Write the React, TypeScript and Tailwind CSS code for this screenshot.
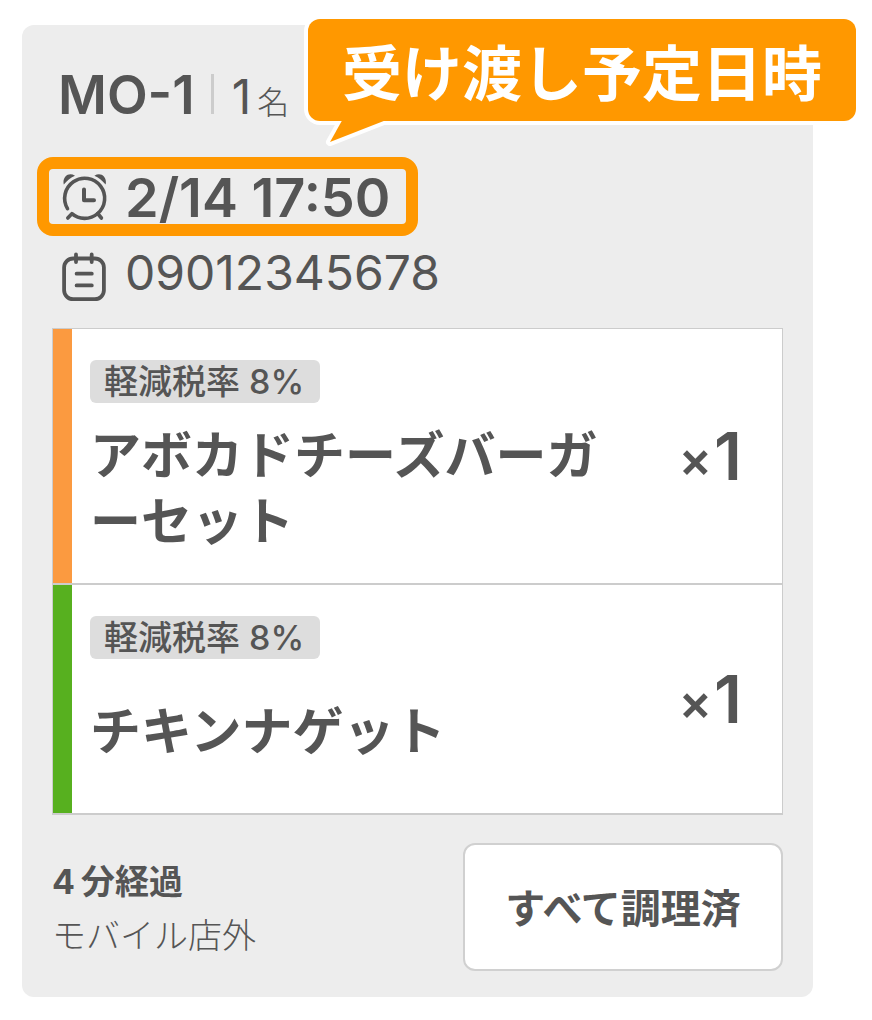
const items = [
  { id: "avocado", name: "アボカドチーズバーガーセット", tax: "軽減税率 8%", count: 1, bar: "bg-[#fb9a40]" },
  { id: "nugget", name: "チキンナゲット", tax: "軽減税率 8%", count: 1, bar: "bg-[#57b01f]" },
];

function AlarmIcon() {
  return (
    <svg width="48" height="48" viewBox="0 0 48 48" fill="none" stroke="currentColor" strokeWidth="3.6" strokeLinecap="round" strokeLinejoin="round" className="shrink-0" aria-hidden="true">
      <path d="M2.8 11.6C1 4.6 7-1.4 14 2.7 9.8 4.7 6.2 7.2 2.8 11.6Z" fill="currentColor" stroke="none" />
      <path d="M44.6 11.6C46.4 4.6 40.4-1.4 33.4 2.7 37.6 4.7 41.2 7.2 44.6 11.6Z" fill="currentColor" stroke="none" />
      <path d="M6.5 35.6A20 20 0 1 1 36.7 40.5C29 47 18 47 10.9 40.7L6.8 45" />
      <path d="M36.7 40.5 40.4 45" />
      <path d="M23 16.4V27.2H33" strokeWidth="4" />
    </svg>
  );
}

function NoteIcon() {
  return (
    <svg width="48" height="50" viewBox="0 0 48 50" fill="none" stroke="currentColor" strokeWidth="3.8" strokeLinecap="round" className="shrink-0" aria-hidden="true">
      <rect x="3.1" y="6.5" width="39.8" height="40.7" rx="9" />
      <path d="M15 2.4V10M30.7 2.4V10M15.6 21.7H30.8M15.6 33.4H30.8" />
    </svg>
  );
}

export default function App() {
  return (
    <main lang="ja" className="relative bg-white pt-[25px] pr-[59px] pb-6 pl-[22px] font-['Inter','Noto_Sans_CJK_JP',sans-serif] text-[#555555]">
      <article className="rounded-xl bg-[#ededed] pt-10 pb-[26px]">
        {/* Order number and party size */}
        <header className="flex items-baseline pl-9 leading-[60px]">
          <h1 className="text-[53px] font-semibold">MO-1</h1>
          <span className="ml-4 h-10 w-[3px] bg-[#cccccc]" />
          <p className="ml-[18px] text-[48px]">
            1<span className="ml-1.5 text-[32px] font-light">名</span>
          </p>
        </header>

        {/* Highlighted pickup time */}
        <div className="mt-6 ml-[15px] flex w-fit items-center gap-4 overflow-hidden rounded-2xl border-12 border-[#ff9800] pr-4 pl-3">
          <AlarmIcon />
          <time className="h-[55px] text-[54px] leading-[57px] font-semibold">2/14 17:50</time>
        </div>

        <div className="mt-2 flex gap-4 pl-[39px]">
          <span className="pt-2">
            <NoteIcon />
          </span>
          <p className="text-[48px] leading-[58px]">09012345678</p>
        </div>

        {/* Ordered items */}
        <ul className="mx-[30px] mt-[26px] divide-y-2 divide-[#cccccc] border border-b-2 border-[#cccccc] bg-white">
          {items.map((item) => (
            <li key={item.id} className="flex min-h-[228px]">
              <span className={`w-[19px] shrink-0 ${item.bar}`} />
              <div className="flex flex-1 flex-col items-start pt-[31px] pb-7 pl-[18px]">
                <span className="rounded-md bg-[#dddddd] pr-4 pl-[14px] text-[34px] leading-[43px] font-medium">{item.tax}</span>
                <div className="mt-5 flex flex-1 items-center">
                  <h2 className="text-[51px] leading-[66px] font-bold">{item.name}</h2>
                </div>
              </div>
              <p className="flex w-[150px] shrink-0 items-center justify-end gap-0.5 pr-10 leading-[66px] font-semibold">
                <span className="pt-1.5 text-[50px]">×</span>
                <span className="text-[66px]">{item.count}</span>
              </p>
            </li>
          ))}
        </ul>

        <footer className="mx-[30px] mt-7 flex items-center justify-between">
          <div className="pt-1 text-[34px] leading-[54px]">
            <p className="font-bold">
              4<span className="ml-1.5">分経過</span>
            </p>
            <p className="font-light">モバイル店外</p>
          </div>
          <button type="button" className="h-32 w-80 rounded-xl border-2 border-[#d0d0d0] bg-white pt-1 text-[40px] font-bold">
            すべて調理済
          </button>
        </footer>
      </article>

      {/* Callout over the card */}
      <div className="absolute top-[19px] right-4 rounded-xl bg-[#ff9800] px-[34px] pt-2 text-[60px] leading-[94px] font-bold text-white ring-4 ring-white">
        受け渡し予定日時
        <svg width="80" height="30" viewBox="0 0 80 30" className="absolute top-full left-4" aria-hidden="true">
          <path d="M20-4 6 21 70-4" fill="#ff9800" stroke="#ffffff" strokeWidth="8" strokeLinejoin="round" />
          <path d="M20-4 6 21 70-4Z" fill="#ff9800" />
        </svg>
      </div>
    </main>
  );
}
